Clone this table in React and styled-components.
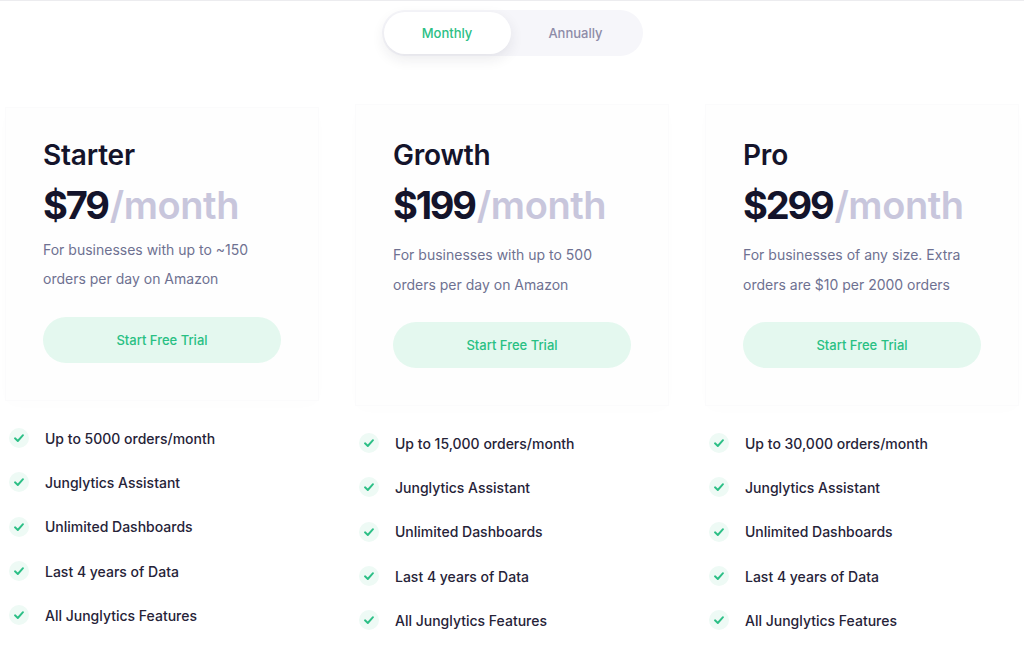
import React, { useState } from 'react';
import styled, { createGlobalStyle } from 'styled-components';

const plans = [
  {
    name: 'Starter',
    price: '$79',
    blurb: ['For businesses with up to ~150', 'orders per day on Amazon'],
    orders: 'Up to 5000 orders/month',
    tight: true,
  },
  {
    name: 'Growth',
    price: '$199',
    blurb: ['For businesses with up to 500', 'orders per day on Amazon'],
    orders: 'Up to 15,000 orders/month',
  },
  {
    name: 'Pro',
    price: '$299',
    blurb: ['For businesses of any size. Extra', 'orders are $10 per 2000 orders'],
    orders: 'Up to 30,000 orders/month',
  },
];

const commonFeatures = [
  'Junglytics Assistant',
  'Unlimited Dashboards',
  'Last 4 years of Data',
  'All Junglytics Features',
];

const CheckIcon = () => (
  <svg width="12" height="12" viewBox="0 0 12 12" fill="none">
    <polyline points="2 6.3 4.8 9 10 3.2" stroke="#2cbf86" strokeWidth="1.9" strokeLinecap="round" strokeLinejoin="round" />
  </svg>
);

const App = () => {
  const [period, setPeriod] = useState('monthly');

  return (
    <Page>
      <GlobalStyles />
      <Toggle>
        <ToggleOption $active={period === 'monthly'} onClick={() => setPeriod('monthly')}>Monthly</ToggleOption>
        <ToggleOption $active={period === 'annually'} onClick={() => setPeriod('annually')}>Annually</ToggleOption>
      </Toggle>

      <Plans>
        {plans.map(plan => (
          <Column key={plan.name}>
            <Card $tight={plan.tight}>
              <PlanName>{plan.name}</PlanName>
              <Price>
                <Amount>{plan.price}</Amount><Per>/month</Per>
              </Price>
              <Blurb $tight={plan.tight}>
                {plan.blurb[0]}<br />{plan.blurb[1]}
              </Blurb>
              <TrialButton $tight={plan.tight}>Start Free Trial</TrialButton>
            </Card>
            <Features>
              {[plan.orders, ...commonFeatures].map(f => (
                <Feature key={f}>
                  <Tick><CheckIcon /></Tick>
                  {f}
                </Feature>
              ))}
            </Features>
          </Column>
        ))}
      </Plans>
    </Page>
  );
};

export default App;

const GlobalStyles = createGlobalStyle`
  * { box-sizing: border-box; }
  body {
    margin: 0;
    background: #ffffff;
    font-family: Inter, "Noto Sans", sans-serif;
    -webkit-font-smoothing: antialiased;
  }
`;

const Page = styled.div`
  width: 1024px;
  height: 646px;
  overflow: hidden;
  border-top: 1px solid #ececef;
`;

const Toggle = styled.div`
  display: flex;
  width: 261px;
  height: 46px;
  margin: 9px auto 0;
  padding: 2px;
  border-radius: 23px;
  background: #f6f6fa;
`;

const ToggleOption = styled.button`
  width: 127px;
  height: 42px;
  border: none;
  border-radius: 21px;
  font-family: inherit;
  font-size: 13px;
  font-weight: 500;
  cursor: pointer;
  background: ${({ $active }) => ($active ? '#ffffff' : 'transparent')};
  color: ${({ $active }) => ($active ? '#2cc085' : '#8e8ca8')};
  box-shadow: ${({ $active }) => ($active ? '0 5px 14px rgba(30, 30, 60, 0.09)' : 'none')};
  &:last-child { flex: 1; }
`;

const Plans = styled.div`
  display: grid;
  grid-template-columns: repeat(3, 312px);
  column-gap: 38px;
  padding-left: 6px;
  margin-top: 49px;
`;

const Column = styled.div`
  display: flex;
  flex-direction: column;
`;

const Card = styled.div`
  display: flex;
  flex-direction: column;
  align-items: flex-start;
  height: ${({ $tight }) => ($tight ? '292px' : '300px')};
  margin-top: ${({ $tight }) => ($tight ? '3px' : '0')};
  padding: ${({ $tight }) => ($tight ? '30px' : '33px')} 0 0 37px;
  background: #fefefe;
  box-shadow: 0 0 0 1px #fbfbfc, 0 4px 16px rgba(20, 20, 43, 0.01);
`;

const PlanName = styled.h2`
  margin: 0;
  font-size: 28px;
  line-height: 34px;
  font-weight: 600;
  color: #14142b;
  letter-spacing: -0.2px;
`;

const Price = styled.div`
  margin-top: 10px;
  font-size: 38px;
  line-height: 46px;
  font-weight: 700;
  color: #14142b;
`;

const Amount = styled.span`
  letter-spacing: -2.2px;
  margin-right: 2px;
`;

const Per = styled.span`
  color: #c8c6dc;
  font-weight: 600;
  letter-spacing: -0.4px;
`;

const Blurb = styled.p`
  margin: ${({ $tight }) => ($tight ? '7px' : '12px')} 0 0;
  font-size: 14px;
  line-height: ${({ $tight }) => ($tight ? '29px' : '30px')};
  color: #6e7191;
`;

const TrialButton = styled.button`
  width: 238px;
  height: 46px;
  margin-top: ${({ $tight }) => ($tight ? '24px' : '22px')};
  border: none;
  border-radius: 23px;
  background: #e4f8ef;
  color: #28c083;
  font-family: inherit;
  font-size: 13px;
  font-weight: 500;
  cursor: pointer;
`;

const Features = styled.ul`
  list-style: none;
  margin: 16px 0 0;
  padding: 0;
`;

const Feature = styled.li`
  display: flex;
  align-items: center;
  height: 44.3px;
  margin-left: 3px;
  font-size: 14px;
  font-weight: 500;
  color: #262338;
`;

const Tick = styled.span`
  display: inline-flex;
  align-items: center;
  justify-content: center;
  width: 20px;
  height: 20px;
  margin-right: 16px;
  border-radius: 50%;
  background: #eefaf5;
`;
